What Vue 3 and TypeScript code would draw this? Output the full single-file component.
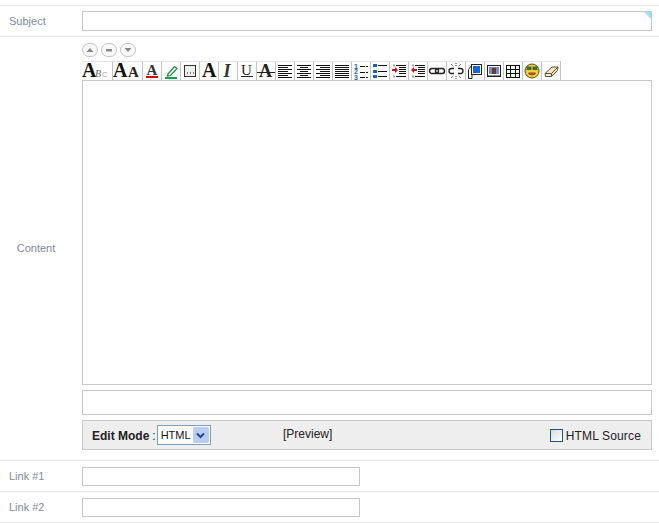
<script setup lang="ts">
interface Tool { id: string; wide?: boolean }
const tools: Tool[] = [
  { id: 'font', wide: true }, { id: 'size', wide: true }, { id: 'color' }, { id: 'hilite' }, { id: 'box' },
  { id: 'bold' }, { id: 'italic' }, { id: 'under' }, { id: 'strike' },
  { id: 'left' }, { id: 'center' }, { id: 'right' }, { id: 'justify' },
  { id: 'ol' }, { id: 'ul' }, { id: 'indent' }, { id: 'outdent' },
  { id: 'link' }, { id: 'unlink' }, { id: 'media' }, { id: 'image' }, { id: 'table' }, { id: 'emoji' }, { id: 'erase' },
]
const alignLines: Record<string, [number, number][]> = {
  left: [[2, 16], [2, 12], [2, 16], [2, 12], [2, 16], [2, 12], [2, 16]],
  center: [[2, 16], [5, 13], [2, 16], [5, 13], [2, 16], [5, 13], [2, 16]],
  right: [[2, 16], [6, 16], [2, 16], [6, 16], [2, 16], [6, 16], [2, 16]],
  justify: [[2, 16], [2, 16], [2, 16], [2, 16], [2, 16], [2, 16], [2, 16]],
}
</script>

<template>
  <div class="page">
    <div class="row subject-row">
      <div class="label">Subject</div>
      <div class="field"><div class="input full subject-input"></div></div>
    </div>

    <div class="row content-row">
      <div class="label centered">Content</div>
      <div class="field content-field">
        <div class="rounds">
          <span class="round"><svg width="10" height="8" viewBox="0 0 10 8"><path d="M5 2 8.500 6h-7Z" fill="#888" /></svg></span>
          <span class="round"><svg width="10" height="8" viewBox="0 0 10 8"><rect x="2" y="3" width="6" height="2.500" fill="#888" /></svg></span>
          <span class="round"><svg width="10" height="8" viewBox="0 0 10 8"><path d="M1.500 2h7L5 6Z" fill="#888" /></svg></span>
        </div>
        <div class="toolbar">
          <span v-for="t in tools" :key="t.id" class="tool" :class="{ wide: t.wide }">
            <svg :width="t.wide ? 30 : 18" height="18" :viewBox="t.wide ? '0 0 30 18' : '0 0 18 18'">
              <template v-if="t.id === 'font'">
                <text x="0" y="15" class="serif" font-size="20" font-weight="700" fill="#111">A</text>
                <text x="13" y="14.500" class="serif" font-size="10" font-style="italic" fill="#666">B</text>
                <text x="20" y="14.500" class="sans" font-size="8" fill="#aaa">C</text>
              </template>
              <template v-else-if="t.id === 'size'">
                <text x="0" y="15" class="serif" font-size="20" font-weight="700" fill="#111">A</text>
                <text x="15" y="15" class="serif" font-size="15" font-weight="700" fill="#222">A</text>
              </template>
              <template v-else-if="t.id === 'color'">
                <text x="3.500" y="13" class="serif" font-size="15" font-weight="700" fill="#333">A</text>
                <rect x="3" y="14" width="12" height="2" fill="#e00000" />
              </template>
              <template v-else-if="t.id === 'hilite'">
                <path d="M6 12 12.500 4.500l2.500 2-6.500 7-3 .5Z" fill="#fff" stroke="#178a3a" stroke-width="1.200" />
                <rect x="3" y="15" width="12" height="2" fill="#08a050" />
              </template>
              <template v-else-if="t.id === 'box'">
                <rect x="3.500" y="3.500" width="11" height="11" fill="#eee" stroke="#333" />
                <path d="M6 11h1M9 11h1M12 11h1" stroke="#111" />
              </template>
              <text v-else-if="t.id === 'bold'" x="2" y="15" class="serif" font-size="20" font-weight="700" fill="#111">A</text>
              <text v-else-if="t.id === 'italic'" x="4.500" y="15" class="serif" font-size="18" font-style="italic" font-weight="700" fill="#333">I</text>
              <template v-else-if="t.id === 'under'">
                <text x="3" y="12.500" class="serif" font-size="15" fill="#222">U</text>
                <rect x="3" y="14" width="12" height="1" fill="#222" />
              </template>
              <template v-else-if="t.id === 'strike'">
                <text x="2" y="15" class="serif" font-size="18" font-weight="700" fill="#222">A</text>
                <rect x="0" y="10" width="18" height="1" fill="#222" />
              </template>
              <template v-else-if="alignLines[t.id]">
                <path v-for="(l, i) in alignLines[t.id]" :key="i" :d="`M${l[0]} ${3.5 + i * 2}H${l[1]}`" stroke="#111" />
              </template>
              <template v-else-if="t.id === 'ol'">
                <text x="2" y="6.500" class="sans" font-size="7" font-weight="700" fill="#1c5fb0">1</text>
                <text x="2" y="12" class="sans" font-size="7" font-weight="700" fill="#1c5fb0">2</text>
                <text x="2" y="17.500" class="sans" font-size="7" font-weight="700" fill="#1c5fb0">3</text>
                <path d="M8 4.500h8M8 10.500h8M8 15.500h8" stroke="#111" stroke-dasharray="5 1" />
              </template>
              <template v-else-if="t.id === 'ul'">
                <rect x="2" y="2" width="4" height="3" fill="#1c5fb0" />
                <rect x="2" y="8" width="4" height="3" fill="#1c5fb0" />
                <rect x="2" y="13" width="4" height="3" fill="#1c5fb0" />
                <path d="M7 3.500h9M7 9.500h9M7 14.500h9" stroke="#111" />
              </template>
              <template v-else-if="t.id === 'indent' || t.id === 'outdent'">
                <path d="M6 3.500h10M9 5.500h7M9 7.500h7M9 9.500h7M9 11.500h7M6 14.500h10" stroke="#111" />
                <path d="M4 2.500v2M4 13.500v2" stroke="#444" />
                <path v-if="t.id === 'indent'" d="M2 7h3V5l3 3-3 3V9H2Z" fill="#c8101c" />
                <path v-else d="M8 7H5V5L2 8l3 3V9h3Z" fill="#c8101c" />
              </template>
              <template v-else-if="t.id === 'link'">
                <rect x="1.500" y="6.500" width="9" height="5" rx="2.500" fill="none" stroke="#222" stroke-width="1.400" />
                <rect x="7.500" y="6.500" width="9" height="5" rx="2.500" fill="none" stroke="#222" stroke-width="1.400" />
              </template>
              <template v-else-if="t.id === 'unlink'">
                <path d="M7 6.500H4.500a2.500 2.500 0 0 0 0 5H7M11 6.500h2.500a2.500 2.500 0 0 1 0 5H11" fill="none" stroke="#222" stroke-width="1.300" />
                <path d="M4 2l3 3M9 1v3M14 2l-3 3M4 16l3-3M9 17v-3M14 16l-3-3" stroke="#333" stroke-dasharray="1 1" />
              </template>
              <template v-else-if="t.id === 'media'">
                <path d="M2.500 7.500 6 3v13.500H2.500Z" fill="#fff" stroke="#222" />
                <rect x="5.500" y="2.500" width="10" height="10" fill="#fff" stroke="#222" />
                <rect x="7" y="4" width="7" height="7" fill="#1566d6" />
              </template>
              <template v-else-if="t.id === 'image'">
                <rect x="2.500" y="3.500" width="13" height="11" fill="#fff" stroke="#222" />
                <rect x="4" y="5" width="10" height="7" fill="#6e8fd0" />
                <rect x="7" y="6" width="4" height="6" fill="#6a3a2a" />
                <rect x="3" y="13" width="12" height="1" fill="#8a8a8a" />
              </template>
              <template v-else-if="t.id === 'table'">
                <rect x="2.500" y="3.500" width="13" height="12" fill="#eef8f4" stroke="#111" />
                <path d="M2.500 7.500h13M2.500 11.500h13M6.500 3.500v12M11.500 3.500v12" stroke="#111" />
              </template>
              <template v-else-if="t.id === 'emoji'">
                <circle cx="9" cy="9" r="7" fill="#f5cf3a" stroke="#5a4a10" />
                <rect x="3.500" y="4.500" width="5" height="3.500" fill="#3d6a3a" />
                <rect x="9.500" y="4.500" width="5" height="3.500" fill="#3d6a3a" />
                <path d="M5.500 11c1 2.500 6 2.500 7 0Z" fill="#d8782a" stroke="#5a2010" stroke-width=".7" />
              </template>
              <template v-else-if="t.id === 'erase'">
                <path d="M3 11.500 10 5h6l-.5 3.500-6 6H3.500Z" fill="#f6e6c6" stroke="#5a4f3a" />
                <path d="M3 11.500h6.500l6-6M9.500 11.500v3" fill="none" stroke="#5a4f3a" />
              </template>
            </svg>
          </span>
        </div>
        <div class="editor"></div>
        <div class="input full caption"></div>
        <div class="modebar">
          <div class="mode-left">
            <b class="mode-label">Edit Mode</b><span class="colon">:</span>
            <span class="select"><span class="select-text">HTML</span><span class="select-arrow"><svg width="9" height="7" viewBox="0 0 9 7"><path d="M1 1.500 4.500 5 8 1.500" fill="none" stroke="#24488c" stroke-width="2" /></svg></span></span>
          </div>
          <span class="preview">[Preview]</span>
          <label class="source"><span class="check"></span><span class="source-text">HTML Source</span></label>
        </div>
      </div>
    </div>

    <div class="row link-row">
      <div class="label">Link #1</div>
      <div class="field"><div class="input short"></div></div>
    </div>
    <div class="row link-row last">
      <div class="label">Link #2</div>
      <div class="field"><div class="input short"></div></div>
    </div>
  </div>
</template>

<style scoped>
.page {
  width: 659px;
  height: 523px;
  padding-top: 5px;
  box-sizing: border-box;
  overflow: hidden;
  background: #fff;
  font-family: "Liberation Sans", Arial, sans-serif;
  font-size: 11px;
  color: #222;
}
.row {
  display: flex;
  align-items: center;
  border-top: 1px solid #e6e6e6;
  box-sizing: border-box;
}
.subject-row { height: 31px; }
.content-row { height: 424px; }
.link-row { height: 31px; }
.link-row.last { height: 32px; border-bottom: 1px solid #e6e6e6; }
.label {
  width: 82px;
  flex: none;
  box-sizing: border-box;
  padding-left: 9px;
  color: #808a98;
  font-size: 11px;
}
.label.centered {
  padding: 0 10px 2px 0;
  text-align: center;
}
.field { width: 570px; flex: none; }
.content-field {
  align-self: flex-start;
  padding-top: 6px;
}
.input {
  border: 1px solid #c8c8c8;
  box-sizing: border-box;
  background: #fff;
}
.full { width: 570px; }
.short { width: 278px; height: 19px; }
.subject-input {
  position: relative;
  height: 20px;
  overflow: hidden;
}
.subject-input::after {
  content: "";
  position: absolute;
  top: 0;
  right: 0;
  border-top: 7px solid #9fe3f2;
  border-left: 7px solid transparent;
}
.rounds {
  display: flex;
  gap: 3px;
  height: 14px;
  margin-bottom: 4px;
}
.round {
  width: 16px;
  height: 14px;
  border: 1px solid #c4c4c4;
  border-radius: 7px;
  box-sizing: border-box;
  display: flex;
  align-items: center;
  justify-content: center;
  background: #f8f8f8;
}
.toolbar {
  display: flex;
  height: 19px;
}
.tool {
  width: 19px;
  height: 19px;
  box-sizing: border-box;
  border-right: 1px solid #c4c4c4;
  border-top: 1px solid #e2e2e2;
  display: block;
  background: #fff;
}
.tool.wide { width: 30.500px; }
.tool svg { display: block; overflow: visible; }
.serif { font-family: "Liberation Serif", serif; }
.sans { font-family: "Liberation Sans", sans-serif; }
.editor {
  height: 305px;
  border: 1px solid #c8c8c8;
  box-sizing: border-box;
  background: #fff;
}
.caption {
  height: 25px;
  margin-top: 5px;
}
.modebar {
  height: 30px;
  margin-top: 5px;
  border: 1px solid #c8c8c8;
  box-sizing: border-box;
  background: #eeeeee;
  display: flex;
  align-items: center;
  padding: 0 10px 0 9px;
}
.mode-left {
  width: 191px;
  display: flex;
  align-items: center;
}
.mode-label { font-size: 12px; color: #222; margin-top: 1px; }
.colon { font-size: 12px; margin: 1px 1px 0 3px; color: #333; }
.select {
  width: 54px;
  height: 20px;
  box-sizing: border-box;
  border: 1px solid #7f9db9;
  background: #fff;
  display: flex;
  align-items: center;
  justify-content: space-between;
  padding: 0 1px 0 3px;
}
.select-text { font-size: 11px; color: #111; }
.select-arrow {
  width: 16px;
  height: 16px;
  background: #b9cdf3;
  border-radius: 2px;
  display: flex;
  align-items: center;
  justify-content: center;
}
.preview { font-size: 12px; color: #222; margin-top: -2px; }
.source {
  margin-left: auto;
  display: flex;
  align-items: center;
  font-size: 12px;
  letter-spacing: .15px;
  color: #222;
}
.source-text { margin-top: 1px; }
.check {
  width: 13px;
  height: 13px;
  box-sizing: border-box;
  border: 1px solid #1c5180;
  background: linear-gradient(135deg, #dcdcd6, #fff);
  margin-right: 3px;
}
</style>
